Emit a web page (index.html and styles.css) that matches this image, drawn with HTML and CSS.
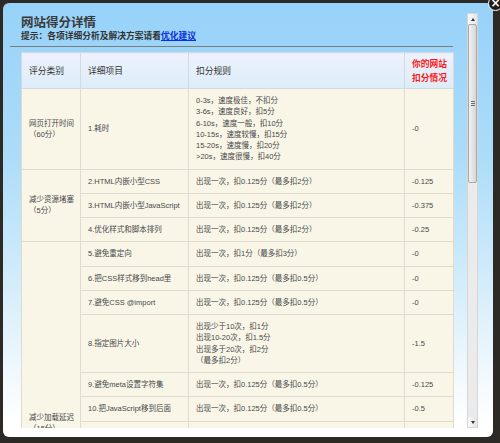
FILE: index.html
```html
<!DOCTYPE html>
<html lang="zh-CN">
<head>
<meta charset="utf-8">
<title>网站得分详情</title>
<link rel="stylesheet" href="styles.css">
</head>
<body>
<div class="dialog">
  <span class="close">×</span>
  <div class="viewport">
    <div class="content">
      <div class="head">
        <h1 class="title">网站得分详情</h1>
        <p class="hint">提示：各项详细分析及解决方案请看<a class="link" href="#">优化建议</a></p>
      </div>
      <table class="score">
        <colgroup>
          <col class="c1"><col class="c2"><col class="c3"><col class="c4">
        </colgroup>
        <thead>
          <tr>
            <th>评分类别</th>
            <th>详细项目</th>
            <th>扣分规则</th>
            <th class="mine">你的网站<br>扣分情况</th>
          </tr>
        </thead>
        <tbody>
          <tr>
            <td>网页打开时间<br>（60分）</td>
            <td>1.耗时</td>
            <td>0-3s，速度极佳，不扣分<br>3-6s，速度良好，扣5分<br>6-10s，速度一般，扣10分<br>10-15s，速度较慢，扣15分<br>15-20s，速度慢，扣20分<br>&gt;20s，速度很慢，扣40分</td>
            <td>-0</td>
          </tr>
          <tr>
            <td rowspan="3">减少资源堵塞<br>（5分）</td>
            <td>2.HTML内嵌小型CSS</td>
            <td>出现一次，扣0.125分（最多扣2分）</td>
            <td>-0.125</td>
          </tr>
          <tr>
            <td>3.HTML内嵌小型JavaScript</td>
            <td>出现一次，扣0.125分（最多扣2分）</td>
            <td>-0.375</td>
          </tr>
          <tr>
            <td>4.优化样式和脚本排列</td>
            <td>出现一次，扣0.125分（最多扣2分）</td>
            <td>-0.25</td>
          </tr>
          <tr>
            <td rowspan="14" class="group-long">减少加载延迟<br>（15分）</td>
            <td>5.避免重定向</td>
            <td>出现一次，扣1分（最多扣3分）</td>
            <td>-0</td>
          </tr>
          <tr>
            <td>6.把CSS样式移到head里</td>
            <td>出现一次，扣0.125分（最多扣0.5分）</td>
            <td>-0</td>
          </tr>
          <tr>
            <td>7.避免CSS @import</td>
            <td>出现一次，扣0.125分（最多扣0.5分）</td>
            <td>-0</td>
          </tr>
          <tr>
            <td>8.指定图片大小</td>
            <td>出现少于10次，扣1分<br>出现10-20次，扣1.5分<br>出现多于20次，扣2分<br>（最多扣2分）</td>
            <td>-1.5</td>
          </tr>
          <tr>
            <td>9.避免meta设置字符集</td>
            <td>出现一次，扣0.125分（最多扣0.5分）</td>
            <td>-0.125</td>
          </tr>
          <tr>
            <td>10.把JavaScript移到后面</td>
            <td>出现一次，扣0.125分（最多扣0.5分）</td>
            <td>-0.5</td>
          </tr>
          <tr>
            <td>11.合并外部JavaScript</td>
            <td>出现一次，扣0.125分（最多扣0.5分）</td>
            <td>-0</td>
          </tr>
          <tr>
            <td>12.合并外部CSS</td>
            <td>出现一次，扣0.125分（最多扣0.5分）</td>
            <td>-0</td>
          </tr>
          <tr>
            <td>13.使用CSS Sprites</td>
            <td>出现一次，扣0.125分（最多扣0.5分）</td>
            <td>-0</td>
          </tr>
          <tr>
            <td>14.减少DNS查找</td>
            <td>出现一次，扣0.125分（最多扣0.5分）</td>
            <td>-0</td>
          </tr>
          <tr>
            <td>15.并行下载资源</td>
            <td>出现一次，扣0.125分（最多扣0.5分）</td>
            <td>-0</td>
          </tr>
          <tr>
            <td>16.避免空的src和href</td>
            <td>出现一次，扣0.125分（最多扣0.5分）</td>
            <td>-0</td>
          </tr>
          <tr>
            <td>17.利用浏览器缓存</td>
            <td>出现一次，扣0.125分（最多扣0.5分）</td>
            <td>-0</td>
          </tr>
          <tr>
            <td>18.启用Gzip压缩</td>
            <td>出现一次，扣0.125分（最多扣0.5分）</td>
            <td>-0</td>
          </tr>
        </tbody>
      </table>
    </div>
    <div class="scrollbar">
      <div class="sb-btn"><span class="tri-up"></span></div>
      <div class="sb-thumb"><span class="grip"></span></div>
      <div class="sb-track"></div>
      <div class="sb-btn"><span class="tri-down"></span></div>
    </div>
  </div>
</div>
</body>
</html>
```
FILE: styles.css
```css
html, body {
  margin: 0;
  padding: 0;
}
body {
  width: 500px;
  height: 443px;
  overflow: hidden;
  background: #2d2a26;
  font-family: "Liberation Sans", "Noto Sans CJK TC", sans-serif;
}
.dialog {
  position: relative;
  margin: 3px 0 0 3px;
  width: 490px;
  height: 434px;
  box-sizing: border-box;
  padding: 10px 15px 9px 7px;
  border-radius: 6px;
  background: linear-gradient(#97d2f9 0%, #acdcf9 35%, #d4edfb 65%, #f4fafe 88%, #ffffff 97%);
}
.close {
  position: absolute;
  left: 485px;
  top: -7px;
  width: 13px;
  height: 13px;
  border-radius: 50%;
  background: #1c1c1c;
  border: 1.5px solid #ffffff;
  color: #ffffff;
  font: bold 12px/13px "DejaVu Sans", sans-serif;
  text-align: center;
}
.viewport {
  display: flex;
  height: 415px;
}
.content {
  flex: 1;
  overflow: hidden;
  padding-right: 14px;
}
.head {
  padding: 2px 0 4px 11px;
  border-bottom: 1px solid #7d7d7d;
  margin-bottom: 5px;
  white-space: nowrap;
}
.title {
  margin: 0;
  font-size: 12.5px;
  line-height: 16px;
  font-weight: bold;
  color: #3a3a3a;
}
.hint {
  margin: 0;
  font-size: 8.75px;
  line-height: 11px;
  font-weight: bold;
  color: #333333;
}
.link {
  color: #0a2fe0;
  text-decoration: underline;
}
.score {
  margin-left: 11px;
  width: 432px;
  table-layout: fixed;
  border-collapse: collapse;
  font-size: 7.5px;
  line-height: 11.25px;
  color: #484848;
}
.c1 { width: 59px; }
.c2 { width: 108px; }
.c3 { width: 216px; }
.c4 { width: 49px; }
.score th {
  padding: 4px 7px 3px;
  font-size: 8.75px;
  line-height: 14px;
  font-weight: normal;
  text-align: left;
  white-space: nowrap;
  color: #333333;
  background: linear-gradient(#eef1fc, #dcedf8);
  border: 1px solid #d4dae3;
}
.score th.mine {
  color: #ff1a1a;
  font-weight: bold;
}
.score td {
  padding: 6px 7px;
  vertical-align: middle;
  white-space: nowrap;
  background: #f9f6e8;
  border: 1px solid #dfdbd0;
}
.score td.group-long {
  padding-bottom: 16px;
}
.scrollbar {
  width: 11px;
  display: flex;
  flex-direction: column;
  box-sizing: border-box;
  background: #ebebeb;
  border: 1px solid #d6d6d6;
}
.sb-btn {
  height: 10px;
  display: flex;
  align-items: center;
  justify-content: center;
  background: linear-gradient(90deg, #fafafa, #e4e4e4);
}
.tri-up {
  width: 0;
  height: 0;
  border-left: 2.5px solid transparent;
  border-right: 2.5px solid transparent;
  border-bottom: 3px solid #333333;
}
.tri-down {
  width: 0;
  height: 0;
  border-left: 2.5px solid transparent;
  border-right: 2.5px solid transparent;
  border-top: 3px solid #333333;
}
.sb-thumb {
  height: 159px;
  box-sizing: border-box;
  border: 1px solid #a9a9a9;
  border-radius: 2px;
  background: linear-gradient(90deg, #f2f2f2, #d6d6d6);
  display: flex;
  align-items: center;
  justify-content: center;
}
.grip {
  width: 4px;
  height: 5px;
  background: repeating-linear-gradient(#6e6e6e 0 1px, transparent 1px 2px);
}
.sb-track {
  flex: 1;
}
```
